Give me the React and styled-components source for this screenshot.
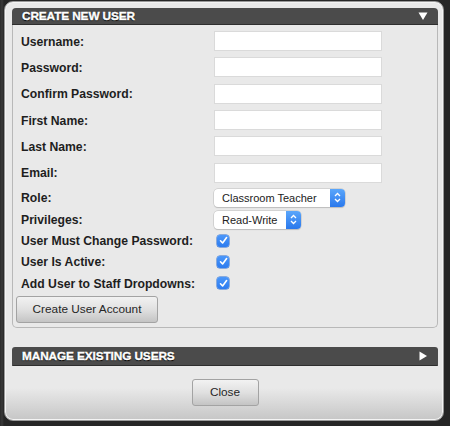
import React from 'react';
import styled, { createGlobalStyle } from 'styled-components';

const GlobalStyle = createGlobalStyle`
  html, body {
    margin: 0;
    padding: 0;
    background: #2b2b2b;
  }
  body {
    font-family: "Liberation Sans", Arial, sans-serif;
  }
`;

const Backdrop = styled.div`
  width: 450px;
  height: 426px;
  padding: 1px 6px 5px 4px;
  box-sizing: border-box;
  background: linear-gradient(to right, #2a2a2a 0, #3a3a3a 2px, #262626 4px);
`;

const Modal = styled.div`
  width: 440px;
  height: 420px;
  box-sizing: border-box;
  border: 1px solid #9a9a9a;
  border-radius: 9px;
  padding: 6px 5px 0 7px;
  background: linear-gradient(
    to bottom,
    #e9e9e9 0,
    #e9e9e9 calc(100% - 32px),
    #c6c6c6 100%
  );
  box-shadow: inset 0 0 0 1px #f4f4f4;
  display: flex;
  flex-direction: column;
`;

const SectionHeader = styled.div`
  height: ${(p) => p.$h}px;
  box-sizing: border-box;
  background: #4b4b4b;
  border-bottom: 1px solid #2e2e2e;
  border-radius: 4px 4px ${(p) => (p.$open ? '0 0' : '2px 2px')};
  display: flex;
  align-items: center;
  justify-content: space-between;
  padding: 0 10px 0 10px;
  color: #fff;
  font-weight: bold;
  font-size: 11.8px;
  letter-spacing: -0.1px;
  text-shadow: 0 1px 1px #000, 0 0 1px #000;
  -webkit-text-stroke: 0.4px #fff;
`;

const Arrow = styled.svg`
  width: 10px;
  height: 10px;
  display: block;
`;

const Panel = styled.div`
  border: 1px solid #b8b8b8;
  border-top: none;
  border-radius: 0 0 5px 5px;
  padding: 3px 8px 4px 8px;
  display: flex;
  flex-direction: column;
`;

const Row = styled.div`
  height: ${(p) => p.$h}px;
  display: flex;
  align-items: center;
`;

const Label = styled.label`
  width: 193px;
  flex: none;
  padding-top: 1px;
  font-size: 12.2px;
  font-weight: bold;
  color: #1e1e1e;
`;

const TextInput = styled.input`
  width: 168px;
  height: 20px;
  box-sizing: border-box;
  border: 1px solid #dadada;
  background: #fff;
  margin: 0;
  padding: 0 4px;
  outline: none;
`;

const Select = styled.div`
  width: ${(p) => p.$w}px;
  height: 18px;
  box-sizing: border-box;
  display: flex;
  align-items: stretch;
  background: #fff;
  border-radius: 4px;
  box-shadow: 0 0 0 0.5px #bdbdbd, 0 1px 1px rgba(0, 0, 0, 0.18);
  overflow: hidden;
`;

const SelectText = styled.span`
  flex: 1;
  display: flex;
  align-items: center;
  padding-left: 8px;
  font-size: 11px;
  color: #222;
`;

const Stepper = styled.span`
  width: 15px;
  flex: none;
  display: flex;
  align-items: center;
  justify-content: center;
  background: linear-gradient(to bottom, #5aa6fb, #2a78ec);
`;

const Check = styled.span`
  width: 12px;
  height: 12px;
  margin-left: 3px;
  border-radius: 3px;
  background: linear-gradient(to bottom, #4b97fa, #2c7bef);
  box-shadow: 0 0 0 0.5px #2a6cd0;
  display: flex;
  align-items: center;
  justify-content: center;
`;

const GreyButton = styled.button`
  width: ${(p) => p.$w}px;
  height: ${(p) => p.$h}px;
  box-sizing: border-box;
  margin: 0;
  border: 1px solid #a3a3a3;
  border-radius: 3px;
  background: linear-gradient(to bottom, #f2f2f2 0%, #e0e0e0 50%, #c4c4c4 100%);
  font-family: "Liberation Sans", Arial, sans-serif;
  font-size: 11.8px;
  color: #262626;
  padding: 0;
`;

const ButtonRow = styled.div`
  margin-top: 2px;
  margin-left: -5px;
`;

const ManageHeader = styled(SectionHeader)`
  margin-top: 19px;
  border-radius: 3px 3px 1px 1px;
`;

const Footer = styled.div`
  display: flex;
  justify-content: center;
  margin-top: 13px;
`;

const fields = ['Username:', 'Password:', 'Confirm Password:', 'First Name:', 'Last Name:', 'Email:'];
const checks = ['User Must Change Password:', 'User Is Active:', 'Add User to Staff Dropdowns:'];

const StepIcon = () => (
  <svg width="7" height="11" viewBox="0 0 7 11">
    <path d="M1 4 L3.5 1.5 L6 4 M1 7 L3.5 9.5 L6 7" fill="none" stroke="#fff" strokeWidth="1.3" />
  </svg>
);

const Tick = () => (
  <svg width="9" height="9" viewBox="0 0 9 9">
    <path d="M1.5 4.8 L3.6 7 L7.6 1.6" fill="none" stroke="#fff" strokeWidth="1.6" strokeLinecap="round" strokeLinejoin="round" />
  </svg>
);

export default function App() {
  return (
    <>
      <GlobalStyle />
      <Backdrop>
        <Modal>
          <SectionHeader $h={17} $open>
            <span>CREATE NEW USER</span>
            <Arrow viewBox="0 0 10 10">
              <path d="M0.5 1.5 H9.5 L5 9 Z" fill="#fff" />
            </Arrow>
          </SectionHeader>
          <Panel>
            {fields.map((f, i) => (
              <Row key={f} $h={26.3}>
                <Label>{f}</Label>
                <TextInput type={i > 0 && i < 3 ? 'password' : 'text'} />
              </Row>
            ))}
            <Row $h={23.6}>
              <Label>Role:</Label>
              <Select $w={131}>
                <SelectText>Classroom Teacher</SelectText>
                <Stepper><StepIcon /></Stepper>
              </Select>
            </Row>
            <Row $h={20.6}>
              <Label>Privileges:</Label>
              <Select $w={87}>
                <SelectText>Read-Write</SelectText>
                <Stepper><StepIcon /></Stepper>
              </Select>
            </Row>
            {checks.map((c) => (
              <Row key={c} $h={21.3}>
                <Label>{c}</Label>
                <Check><Tick /></Check>
              </Row>
            ))}
            <ButtonRow>
              <GreyButton $w={142} $h={27}>Create User Account</GreyButton>
            </ButtonRow>
          </Panel>
          <ManageHeader $h={19}>
            <span>MANAGE EXISTING USERS</span>
            <Arrow viewBox="0 0 10 10">
              <path d="M1.5 0.5 V9.5 L9 5 Z" fill="#fff" />
            </Arrow>
          </ManageHeader>
          <Footer>
            <GreyButton $w={67} $h={27}>Close</GreyButton>
          </Footer>
        </Modal>
      </Backdrop>
    </>
  );
}
